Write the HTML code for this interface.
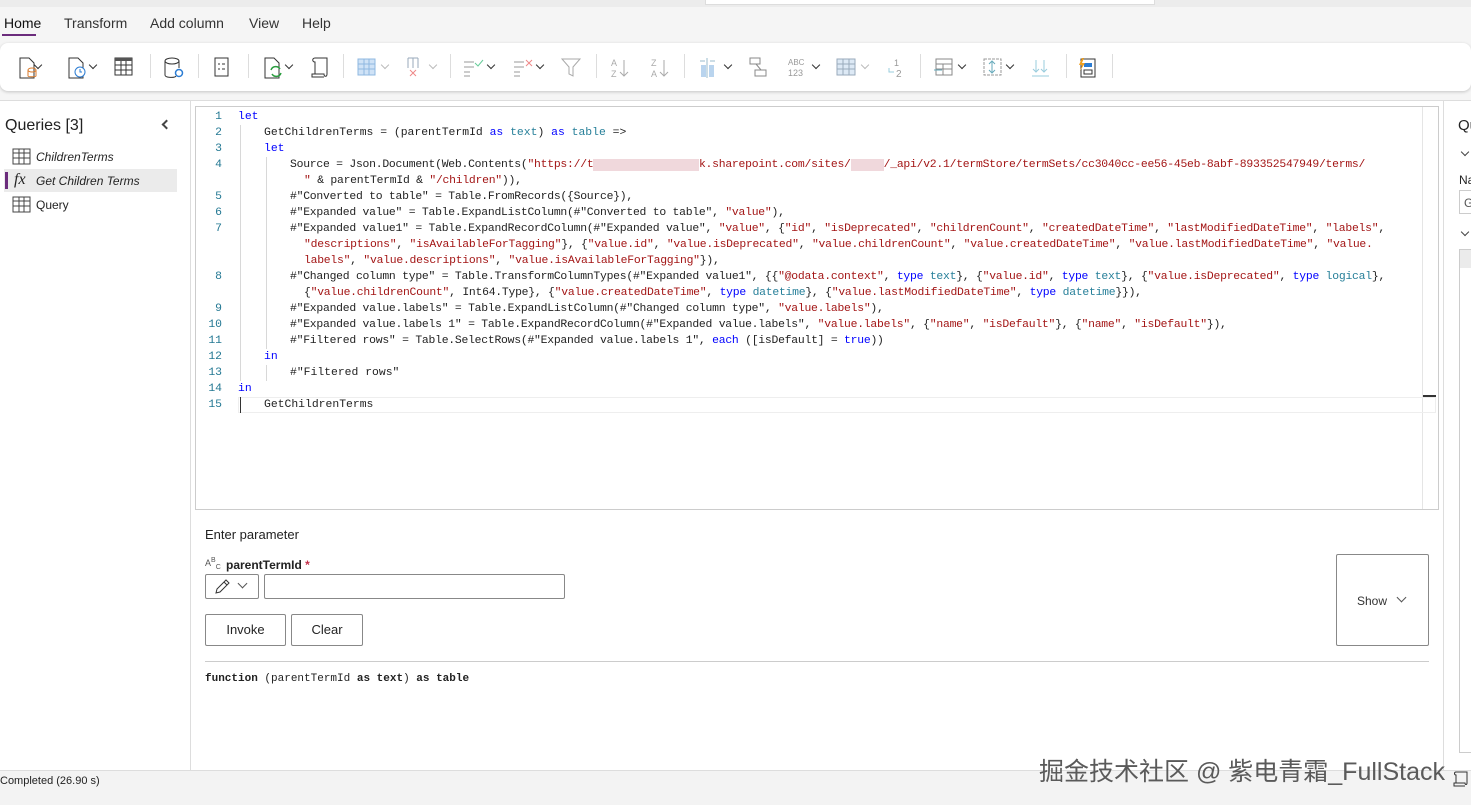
<!DOCTYPE html>
<html><head><meta charset="utf-8"><style>
*{box-sizing:border-box;margin:0;padding:0}
body{width:1471px;height:805px;overflow:hidden;background:#f5f5f5;font-family:"Liberation Sans","Noto Sans CJK SC",sans-serif;color:#242424;position:relative}
.abs{position:absolute}
.tabs span{position:absolute;top:15px;font-size:14px;color:#333}
.ribbon{left:0;top:43px;width:1471px;height:48px;background:#fff;border-radius:8px;box-shadow:0 1px 3px rgba(0,0,0,.2)}
.ic{position:absolute;top:56px}
.sep{position:absolute;top:54px;width:1px;height:24px;background:#ddd}
.chev{position:absolute;top:62px;width:6px;height:6px;border-right:1.5px solid #333;border-bottom:1.5px solid #333;transform:rotate(45deg)}
.chev.l{border-color:#bbb}
.code{font-family:"Liberation Mono",monospace;font-size:11.4px;white-space:pre;color:#222}
.ln{position:absolute;left:196px;width:26px;text-align:right;font-family:"Liberation Mono",monospace;font-size:11.4px;color:#237893}
.k{color:#0000ff}.t{color:#267f99}.s{color:#a31515}
.row{position:absolute;height:16px;line-height:16px;letter-spacing:-0.24px}
.row.n{letter-spacing:0}
.guide{position:absolute;width:1px;background:#d8d8d8}
</style></head><body>
<div class="abs" style="left:0;top:0;width:1471px;height:7px;background:#ececec"></div>
<div class="abs" style="left:705px;top:0;width:450px;height:5px;background:#fff;border:1px solid #ddd;border-top:0"></div>
<div class="tabs">
<span style="left:4px;color:#111">Home</span>
<span style="left:64px">Transform</span><span style="left:150px">Add column</span><span style="left:249px">View</span><span style="left:302px">Help</span>
</div>
<div class="abs" style="left:2px;top:34px;width:34px;height:2px;background:#6b2c7c"></div>
<div class="abs ribbon"></div>
<svg class="ic" style="left:17px" width="22" height="24"><path d="M3 2h9l5 5v15H3z" fill="none" stroke="#333"/><ellipse cx="15" cy="14" rx="4" ry="2" fill="none" stroke="#d97a2b"/><path d="M11 14v6c0 1 8 1 8 0v-6" fill="none" stroke="#d97a2b"/></svg>
<div class="chev" style="left:35px"></div>
<svg class="ic" style="left:66px" width="22" height="24"><path d="M3 2h9l5 5v15H3z" fill="none" stroke="#333"/><circle cx="14" cy="16" r="5" fill="#fff" stroke="#2b7cd3"/><path d="M14 13v3h2" stroke="#2b7cd3" fill="none"/></svg>
<div class="chev" style="left:90px"></div>
<svg class="ic" style="left:114px" width="20" height="22"><rect x="1" y="2" width="17" height="17" fill="none" stroke="#333"/><rect x="1" y="2" width="17" height="3" fill="#555"/><path d="M1 9h17M1 14h17M7 5v14M12 5v14" stroke="#333"/></svg>
<div class="sep" style="left:150px"></div>
<svg class="ic" style="left:163px" width="22" height="24"><ellipse cx="9" cy="5" rx="7" ry="3" fill="none" stroke="#333"/><path d="M2 5v14c0 3 10 3 11 1M16 5v7" fill="none" stroke="#333"/><circle cx="16" cy="17" r="3.5" fill="none" stroke="#2b7cd3" stroke-width="1.5"/></svg>
<div class="sep" style="left:198px"></div>
<svg class="ic" style="left:213px" width="18" height="24"><rect x="2" y="2" width="13" height="18" fill="none" stroke="#333"/><path d="M5 8h2M9 8h3M5 13h2M9 13h3" stroke="#333"/></svg>
<div class="sep" style="left:248px"></div>
<svg class="ic" style="left:262px" width="22" height="24"><path d="M3 2h9l5 5v15H3z" fill="none" stroke="#333"/><path d="M9 14a5 5 0 0 1 9-1M19 17a5 5 0 0 1-9 1" fill="none" stroke="#2a9d3f" stroke-width="1.5"/></svg>
<div class="chev" style="left:286px"></div>
<svg class="ic" style="left:309px" width="22" height="24"><path d="M6 2h12v16c0 3-3 3-3 0H3v3h12M6 2c-3 0-3 4 0 4V18" fill="none" stroke="#333"/></svg>
<div class="sep" style="left:343px"></div>
<svg class="ic" style="left:357px" width="20" height="22"><rect x="1" y="3" width="17" height="16" fill="#cfe2f6" stroke="#8fb8e0"/><path d="M1 8h17M1 13h17M7 3v16M12 3v16" stroke="#8fb8e0"/></svg>
<div class="chev l" style="left:382px"></div>
<svg class="ic" style="left:405px" width="20" height="22"><path d="M3 2v10M8 2v10M13 2v10M3 2h10" stroke="#9ab" fill="none"/><path d="M5 14l6 6M11 14l-6 6" stroke="#e88"/></svg>
<div class="chev l" style="left:430px"></div>
<div class="sep" style="left:450px"></div>
<svg class="ic" style="left:462px" width="22" height="22"><path d="M2 6h10M2 11h10M2 16h6M2 20h6" stroke="#999"/><path d="M13 7l3 3 5-6" stroke="#6c9" fill="none"/></svg>
<div class="chev" style="left:488px"></div>
<svg class="ic" style="left:512px" width="22" height="22"><path d="M2 6h10M2 11h10M2 16h6M2 20h6" stroke="#999"/><path d="M14 4l6 6M20 4l-6 6" stroke="#e88"/></svg>
<div class="chev" style="left:537px"></div>
<svg class="ic" style="left:560px" width="22" height="22"><path d="M2 3h18l-7 8v9l-4-2v-7z" fill="none" stroke="#aaa"/></svg>
<div class="sep" style="left:596px"></div>
<svg class="ic" style="left:610px" width="20" height="24"><text x="1" y="10" font-size="9" fill="#aaa" font-family="Liberation Sans">A</text><text x="1" y="21" font-size="9" fill="#aaa" font-family="Liberation Sans">Z</text><path d="M14 4v16M10 16l4 4 4-4" stroke="#aaa" fill="none"/></svg>
<svg class="ic" style="left:650px" width="20" height="24"><text x="1" y="10" font-size="9" fill="#aaa" font-family="Liberation Sans">Z</text><text x="1" y="21" font-size="9" fill="#aaa" font-family="Liberation Sans">A</text><path d="M14 4v16M10 16l4 4 4-4" stroke="#aaa" fill="none"/></svg>
<div class="sep" style="left:684px"></div>
<svg class="ic" style="left:698px" width="22" height="24"><rect x="3" y="9" width="5" height="12" fill="#b9d4ee"/><rect x="11" y="9" width="5" height="12" fill="#b9d4ee"/><path d="M9 2v20M2 5h5M12 5h5" stroke="#9bc" fill="none"/></svg>
<div class="chev" style="left:725px"></div>
<svg class="ic" style="left:748px" width="20" height="22"><rect x="2" y="2" width="10" height="6" fill="none" stroke="#888"/><rect x="7" y="14" width="11" height="6" fill="none" stroke="#888"/><path d="M8 8l5 6" stroke="#888"/></svg>
<svg class="ic" style="left:787px" width="26" height="24"><text x="1" y="9" font-size="8" fill="#999" font-family="Liberation Sans">ABC</text><text x="1" y="20" font-size="9" fill="#999" font-family="Liberation Sans">123</text></svg>
<div class="chev" style="left:813px"></div>
<svg class="ic" style="left:836px" width="22" height="22"><rect x="1" y="3" width="18" height="16" fill="#dde9f5" stroke="#9ab"/><path d="M1 8h18M1 13h18M7 3v16M13 3v16" stroke="#9ab"/></svg>
<div class="chev l" style="left:862px"></div>
<svg class="ic" style="left:884px" width="22" height="24"><text x="10" y="10" font-size="9" fill="#999" font-family="Liberation Sans">1</text><text x="12" y="21" font-size="10" fill="#999" font-family="Liberation Sans">2</text><path d="M5 12v4h5" stroke="#9cd" fill="none"/></svg>
<div class="sep" style="left:920px"></div>
<svg class="ic" style="left:933px" width="22" height="24"><rect x="3" y="3" width="16" height="16" fill="none" stroke="#888"/><path d="M3 8h16M3 13h16M10 8v11" stroke="#888"/><path d="M1 14h8" stroke="#6ab"/></svg>
<div class="chev" style="left:959px"></div>
<svg class="ic" style="left:982px" width="22" height="24"><rect x="2" y="3" width="17" height="16" fill="none" stroke="#999" stroke-dasharray="3 1"/><path d="M10 5v12M7 8l3-3 3 3M7 14l3 3 3-3" stroke="#6ab" fill="none"/></svg>
<div class="chev" style="left:1007px"></div>
<svg class="ic" style="left:1030px" width="22" height="24"><path d="M6 4v12M3 13l3 3 3-3M14 4v12M11 13l3 3 3-3M2 20h17" stroke="#9cd" fill="none"/></svg>
<div class="sep" style="left:1066px"></div>
<svg class="ic" style="left:1077px" width="22" height="24"><rect x="4" y="3" width="14" height="18" fill="#fff" stroke="#333"/><rect x="7" y="7" width="8" height="4" fill="#2b7cd3"/><rect x="7" y="14" width="8" height="4" fill="none" stroke="#333"/><path d="M5 2l-3 7h3l-2 6 5-8H5l2-5z" fill="#f0a020"/></svg>
<div class="sep" style="left:1112px"></div>

<div class="abs" style="left:0;top:100px;width:1471px;height:670px;background:#fff;border-top:1px solid #ddd"></div>
<div class="abs" style="left:190px;top:101px;width:1px;height:669px;background:#ddd"></div>
<div class="abs" style="left:5px;top:117px;font-size:16px;color:#222">Queries [3]</div>
<div class="abs" style="left:163px;top:121px;width:7px;height:7px;border-left:2px solid #444;border-bottom:2px solid #444;transform:rotate(45deg)"></div>
<svg class="abs" style="left:12px;top:148px" width="20" height="18"><rect x="1" y="1" width="17" height="15" fill="none" stroke="#444"/><path d="M1 5h17M1 10h17M7 1v15M12 1v15" stroke="#444"/></svg>
<div class="abs" style="left:36px;top:150px;font-size:12px;font-style:italic">ChildrenTerms</div>
<div class="abs" style="left:4px;top:169px;width:173px;height:23px;background:#ebebeb"></div>
<div class="abs" style="left:5px;top:172px;width:3px;height:17px;background:#6b2c7c"></div>
<div class="abs" style="left:14px;top:171px;font-size:16px;font-style:italic;font-family:'Liberation Serif',serif">fx</div>
<div class="abs" style="left:36px;top:174px;font-size:12px;font-style:italic">Get Children Terms</div>
<svg class="abs" style="left:12px;top:196px" width="20" height="18"><rect x="1" y="1" width="17" height="15" fill="none" stroke="#444"/><path d="M1 5h17M1 10h17M7 1v15M12 1v15" stroke="#444"/></svg>
<div class="abs" style="left:36px;top:198px;font-size:12px">Query</div>

<div class="abs" style="left:195px;top:106px;width:1244px;height:404px;border:1px solid #ccc;background:#fff"></div>
<div class="abs" style="left:1422px;top:107px;width:1px;height:402px;background:#e5e5e5"></div>
<div class="abs" style="left:1423px;top:395px;width:13px;height:2px;background:#333"></div>
<div class="abs" style="left:238px;top:397px;width:1198px;height:16px;border:1px solid #eee"></div>
<div class="guide" style="left:240px;top:125px;height:256px"></div>
<div class="guide" style="left:266px;top:157px;height:192px"></div>
<div class="guide" style="left:266px;top:365px;height:16px"></div>
<div class="abs" style="left:240px;top:397px;width:1px;height:16px;background:#333"></div>
<div class="code">
<div class="ln" style="top:109px;line-height:16px">1</div>
<div class="ln" style="top:125px;line-height:16px">2</div>
<div class="ln" style="top:141px;line-height:16px">3</div>
<div class="ln" style="top:157px;line-height:16px">4</div>
<div class="ln" style="top:189px;line-height:16px">5</div>
<div class="ln" style="top:205px;line-height:16px">6</div>
<div class="ln" style="top:221px;line-height:16px">7</div>
<div class="ln" style="top:269px;line-height:16px">8</div>
<div class="ln" style="top:301px;line-height:16px">9</div>
<div class="ln" style="top:317px;line-height:16px">10</div>
<div class="ln" style="top:333px;line-height:16px">11</div>
<div class="ln" style="top:349px;line-height:16px">12</div>
<div class="ln" style="top:365px;line-height:16px">13</div>
<div class="ln" style="top:381px;line-height:16px">14</div>
<div class="ln" style="top:397px;line-height:16px">15</div>
<div class="row n" style="left:238px;top:109px"><span class="k">let</span></div>
<div class="row n" style="left:264px;top:125px">GetChildrenTerms = (parentTermId <span class="k">as</span> <span class="t">text</span>) <span class="k">as</span> <span class="t">table</span> =&gt;</div>
<div class="row n" style="left:264px;top:141px"><span class="k">let</span></div>
<div class="row" style="left:290px;top:157px">Source = Json.Document(Web.Contents(<span class="s">"https://t<span style="background:#f0d8dc;color:#f0d8dc">xxxxxxxxxxxxxxxx</span>k.sharepoint.com/sites/<span style="background:#f0d8dc;color:#f0d8dc">xxxxx</span>/_api/v2.1/termStore/termSets/cc3040cc-ee56-45eb-8abf-893352547949/terms/</span></div>
<div class="row" style="left:304px;top:173px"><span class="s">"</span> &amp; parentTermId &amp; <span class="s">"/children"</span>)),</div>
<div class="row" style="left:290px;top:189px">#"Converted to table" = Table.FromRecords({Source}),</div>
<div class="row" style="left:290px;top:205px">#"Expanded value" = Table.ExpandListColumn(#"Converted to table", <span class="s">"value"</span>),</div>
<div class="row" style="left:290px;top:221px">#"Expanded value1" = Table.ExpandRecordColumn(#"Expanded value", <span class="s">"value"</span>, {<span class="s">"id"</span>, <span class="s">"isDeprecated"</span>, <span class="s">"childrenCount"</span>, <span class="s">"createdDateTime"</span>, <span class="s">"lastModifiedDateTime"</span>, <span class="s">"labels"</span>,</div>
<div class="row" style="left:304px;top:237px"><span class="s">"descriptions"</span>, <span class="s">"isAvailableForTagging"</span>}, {<span class="s">"value.id"</span>, <span class="s">"value.isDeprecated"</span>, <span class="s">"value.childrenCount"</span>, <span class="s">"value.createdDateTime"</span>, <span class="s">"value.lastModifiedDateTime"</span>, <span class="s">"value.</span></div>
<div class="row" style="left:304px;top:253px"><span class="s">labels"</span>, <span class="s">"value.descriptions"</span>, <span class="s">"value.isAvailableForTagging"</span>}),</div>
<div class="row" style="left:290px;top:269px">#"Changed column type" = Table.TransformColumnTypes(#"Expanded value1", {{<span class="s">"@odata.context"</span>, <span class="k">type</span> <span class="t">text</span>}, {<span class="s">"value.id"</span>, <span class="k">type</span> <span class="t">text</span>}, {<span class="s">"value.isDeprecated"</span>, <span class="k">type</span> <span class="t">logical</span>},</div>
<div class="row" style="left:304px;top:285px">{<span class="s">"value.childrenCount"</span>, Int64.Type}, {<span class="s">"value.createdDateTime"</span>, <span class="k">type</span> <span class="t">datetime</span>}, {<span class="s">"value.lastModifiedDateTime"</span>, <span class="k">type</span> <span class="t">datetime</span>}}),</div>
<div class="row" style="left:290px;top:301px">#"Expanded value.labels" = Table.ExpandListColumn(#"Changed column type", <span class="s">"value.labels"</span>),</div>
<div class="row" style="left:290px;top:317px">#"Expanded value.labels 1" = Table.ExpandRecordColumn(#"Expanded value.labels", <span class="s">"value.labels"</span>, {<span class="s">"name"</span>, <span class="s">"isDefault"</span>}, {<span class="s">"name"</span>, <span class="s">"isDefault"</span>}),</div>
<div class="row" style="left:290px;top:333px">#"Filtered rows" = Table.SelectRows(#"Expanded value.labels 1", <span class="k">each</span> ([isDefault] = <span class="k">true</span>))</div>
<div class="row n" style="left:264px;top:349px"><span class="k">in</span></div>
<div class="row n" style="left:290px;top:365px">#"Filtered rows"</div>
<div class="row n" style="left:238px;top:381px"><span class="k">in</span></div>
<div class="row n" style="left:264px;top:397px">GetChildrenTerms</div>
</div>

<div class="abs" style="left:205px;top:527px;font-size:13px;color:#222">Enter parameter</div>
<div class="abs" style="left:205px;top:557px;font-size:9px;color:#555">A<sup style="font-size:7px">B</sup><sub style="font-size:7px">C</sub></div>
<div class="abs" style="left:226px;top:558px;font-size:12px;font-weight:bold;color:#222">parentTermId <span style="color:#c4314b">*</span></div>
<div class="abs" style="left:205px;top:574px;width:54px;height:25px;border:1px solid #888;border-radius:2px"></div>
<svg class="abs" style="left:213px;top:578px" width="18" height="18"><path d="M3 15l1-4 9-9 3 3-9 9z M11 4l3 3" fill="none" stroke="#333"/></svg>
<div class="abs" style="left:239px;top:580px;width:7px;height:7px;border-right:1px solid #555;border-bottom:1px solid #555;transform:rotate(45deg)"></div>
<div class="abs" style="left:264px;top:574px;width:301px;height:25px;border:1px solid #888;border-radius:2px"></div>
<div class="abs" style="left:205px;top:614px;width:81px;height:32px;border:1px solid #888;border-radius:2px;font-size:13px;text-align:center;line-height:30px">Invoke</div>
<div class="abs" style="left:291px;top:614px;width:72px;height:32px;border:1px solid #888;border-radius:2px;font-size:13px;text-align:center;line-height:30px">Clear</div>
<div class="abs" style="left:1336px;top:554px;width:93px;height:92px;border:1px solid #888;border-radius:2px;font-size:12px;line-height:92px;padding-left:20px;color:#333">Show</div>
<div class="abs" style="left:1398px;top:594px;width:7px;height:7px;border-right:1px solid #555;border-bottom:1px solid #555;transform:rotate(45deg)"></div>
<div class="abs" style="left:205px;top:661px;width:1224px;height:1px;background:#ccc"></div>
<div class="abs code" style="left:205px;top:673px;font-size:11px"><b>function</b> (parentTermId <b>as</b> <b>text</b>) <b>as</b> <b>table</b></div>

<div class="abs" style="left:1443px;top:101px;width:1px;height:669px;background:#ddd"></div>
<div class="abs" style="left:1458px;top:117px;font-size:15px">Qu</div>
<div class="abs" style="left:1462px;top:149px;width:6px;height:6px;border-right:1px solid #444;border-bottom:1px solid #444;transform:rotate(45deg)"></div>
<div class="abs" style="left:1459px;top:173px;font-size:12px">Na</div>
<div class="abs" style="left:1459px;top:190px;width:20px;height:24px;border:1px solid #ccc;font-size:12px;padding:5px 4px;color:#555">G</div>
<div class="abs" style="left:1462px;top:229px;width:6px;height:6px;border-right:1px solid #444;border-bottom:1px solid #444;transform:rotate(45deg)"></div>
<div class="abs" style="left:1459px;top:249px;width:20px;height:504px;border:1px solid #ccc"></div>
<div class="abs" style="left:1460px;top:250px;width:12px;height:18px;background:#ebebeb"></div>

<div class="abs" style="left:0;top:770px;width:1471px;height:35px;background:#f3f3f3;border-top:1px solid #ddd"></div>
<div class="abs" style="left:0;top:775px;font-size:11px;color:#222">Completed (26.90 s)</div>
<div class="abs" style="left:1039px;top:752px;font-size:25px;color:#5a5a5a;white-space:nowrap">掘金技术社区 @ 紫电青霜_FullStack</div>
<svg class="abs" style="left:1452px;top:770px" width="18" height="18"><path d="M4 2h11v11c0 2-2 2-2 0H2v3h11M4 2c-2 0-2 3 0 3v8" fill="none" stroke="#333"/></svg>
</body></html>
